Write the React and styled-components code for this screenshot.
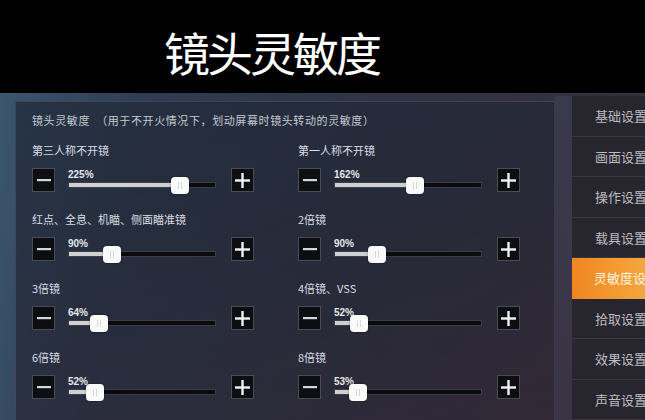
import React from 'react'
import styled, { createGlobalStyle } from 'styled-components'

const Global = createGlobalStyle`
    html, body {
        margin: 0;
        padding: 0;
        background: #000;
    }
    body {
        font-family: "Noto Sans CJK SC", "Noto Sans", sans-serif;
        width: 645px;
        height: 420px;
        overflow: hidden;
    }
`

const Page = styled.div`
    width: 645px;
    height: 420px;
    display: flex;
    flex-direction: column;
    overflow: hidden;
`

const Header = styled.div`
    height: 97px;
    background: #000;
    display: flex;
    align-items: center;
    padding-left: 164px;
    box-sizing: border-box;
`

const Title = styled.h1`
    margin: 0;
    color: #fff;
    font-size: 46px;
    font-weight: 400;
    letter-spacing: -3px;
    line-height: 1;
    padding-top: 8px;
`

const Game = styled.div`
    flex: 1;
    display: flex;
    background: linear-gradient(100deg, #3b566f 0%, #2f3d52 20%, #2e3344 55%, #33303f 80%, #3c2d3a 100%);
`

const PanelWrap = styled.div`
    width: 555px;
    padding: 8px 0 0 15px;
    box-sizing: border-box;
`

const Panel = styled.div`
    height: 100%;
    box-sizing: border-box;
    padding: 11px 0 0 16px;
    background: linear-gradient(160deg, rgba(32, 42, 58, 0.75) 0%, rgba(36, 38, 52, 0.7) 50%, rgba(48, 36, 48, 0.6) 100%);
    border-top: 1px solid rgba(120, 130, 150, 0.25);
    border-left: 1px solid rgba(120, 130, 150, 0.25);
    border-right: 1px solid rgba(120, 130, 150, 0.2);
`

const Note = styled.div`
    color: #c4c9d1;
    font-size: 11px;
    line-height: 14px;
    letter-spacing: 0.6px;
    white-space: pre;
    margin-bottom: 15px;
`

const Grid = styled.div`
    display: grid;
    grid-template-columns: 266px 240px;
    row-gap: 19px;
`

const Item = styled.div`
    display: flex;
    flex-direction: column;
    gap: 10px;
`

const Label = styled.div`
    color: #d9dde3;
    font-size: 11px;
    line-height: 16px;
`

const Controls = styled.div`
    display: flex;
    align-items: flex-start;
    height: 24px;
`

const StepButton = styled.div`
    width: 23px;
    height: 24px;
    box-sizing: border-box;
    background: #0d0e12;
    border: 1px solid #4a4c55;
    display: flex;
    align-items: center;
    justify-content: center;
    margin-left: ${p => p.$gap}px;
`

const Slider = styled.div`
    position: relative;
    width: 148px;
    height: 24px;
    margin-left: 13px;
`

const Percent = styled.div`
    position: absolute;
    left: 0;
    top: 1px;
    color: #e4e6ea;
    font-family: "Liberation Sans", Arial, sans-serif;
    font-size: 10px;
    font-weight: 700;
    line-height: 12px;
`

const Track = styled.div`
    position: absolute;
    left: 0;
    right: 0;
    top: 14px;
    height: 6px;
    background: #0b0b0f;
    border: 1px solid #3c3e46;
    box-sizing: border-box;
`

const Fill = styled.div`
    height: 100%;
    background: #cfd0d4;
`

const Handle = styled.div`
    position: absolute;
    top: 9px;
    width: 18px;
    height: 17px;
    margin-left: -9px;
    border-radius: 4px;
    background: #fafafa;
    box-shadow: 0 0 2px rgba(0, 0, 0, 0.5);
    display: flex;
    align-items: center;
    justify-content: center;
    gap: 2px;

    &::before, &::after {
        content: '';
        width: 1px;
        height: 7px;
        background: #d8d8d8;
    }
`

const Stripe = styled.div`
    width: 17px;
    background: linear-gradient(180deg, #3a3a4c 0%, #3a3444 100%);
    margin-top: 3px;
`

const Sidebar = styled.div`
    flex: 1;
    background: #27252d;
    display: flex;
    flex-direction: column;
    margin-top: 3px;
    overflow: hidden;
`

const Tab = styled.div`
    height: 40.5px;
    flex-shrink: 0;
    box-sizing: border-box;
    display: flex;
    align-items: center;
    padding-left: 23px;
    white-space: nowrap;
    font-size: 13px;
    color: ${p => (p.$active ? '#fff4e2' : '#bdbcc2')};
    border-bottom: 1px solid ${p => (p.$active ? 'transparent' : '#3a3740')};
    background: ${p => (p.$active ? 'linear-gradient(90deg, #ef8420 0%, #f49a30 60%, #f5a640 100%)' : 'transparent')};
    margin-left: ${p => (p.$active ? '-1px' : '0')};
`

function Minus() {
    return (
        <svg width="14" height="14" viewBox="0 0 14 14">
            <rect x="0" y="6" width="14" height="2.2" fill="#d6d6d8" />
        </svg>
    )
}

function Plus() {
    return (
        <svg width="15" height="15" viewBox="0 0 15 15">
            <rect x="0" y="6.3" width="15" height="2.4" fill="#f2f2f2" />
            <rect x="6.3" y="0" width="2.4" height="15" fill="#f2f2f2" />
        </svg>
    )
}

const settings = [
    { label: '第三人称不开镜', value: '225%', pos: 0.76 },
    { label: '第一人称不开镜', value: '162%', pos: 0.55 },
    { label: '红点、全息、机瞄、侧面瞄准镜', value: '90%', pos: 0.30 },
    { label: '2倍镜', value: '90%', pos: 0.29 },
    { label: '3倍镜', value: '64%', pos: 0.21 },
    { label: '4倍镜、VSS', value: '52%', pos: 0.17 },
    { label: '6倍镜', value: '52%', pos: 0.18 },
    { label: '8倍镜', value: '53%', pos: 0.16 },
]

const tabs = ['基础设置', '画面设置', '操作设置', '载具设置', '灵敏度设置', '拾取设置', '效果设置', '声音设置']

function Setting({ label, value, pos }) {
    return (
        <Item>
            <Label>{label}</Label>
            <Controls>
                <StepButton $gap={0}><Minus /></StepButton>
                <Slider>
                    <Percent>{value}</Percent>
                    <Track>
                        <Fill style={{ width: `${pos * 100}%` }} />
                    </Track>
                    <Handle style={{ left: `${pos * 100}%` }} />
                </Slider>
                <StepButton $gap={15}><Plus /></StepButton>
            </Controls>
        </Item>
    )
}

export default function App() {
    return (
        <Page>
            <Global />
            <Header>
                <Title>镜头灵敏度</Title>
            </Header>
            <Game>
                <PanelWrap>
                    <Panel>
                        <Note>{'镜头灵敏度  （用于不开火情况下，划动屏幕时镜头转动的灵敏度）'}</Note>
                        <Grid>
                            {settings.map(s => (
                                <Setting key={s.label} {...s} />
                            ))}
                        </Grid>
                    </Panel>
                </PanelWrap>
                <Stripe />
                <Sidebar>
                    {tabs.map((t, i) => (
                        <Tab key={t} $active={i === 4}>{t}</Tab>
                    ))}
                </Sidebar>
            </Game>
        </Page>
    )
}
